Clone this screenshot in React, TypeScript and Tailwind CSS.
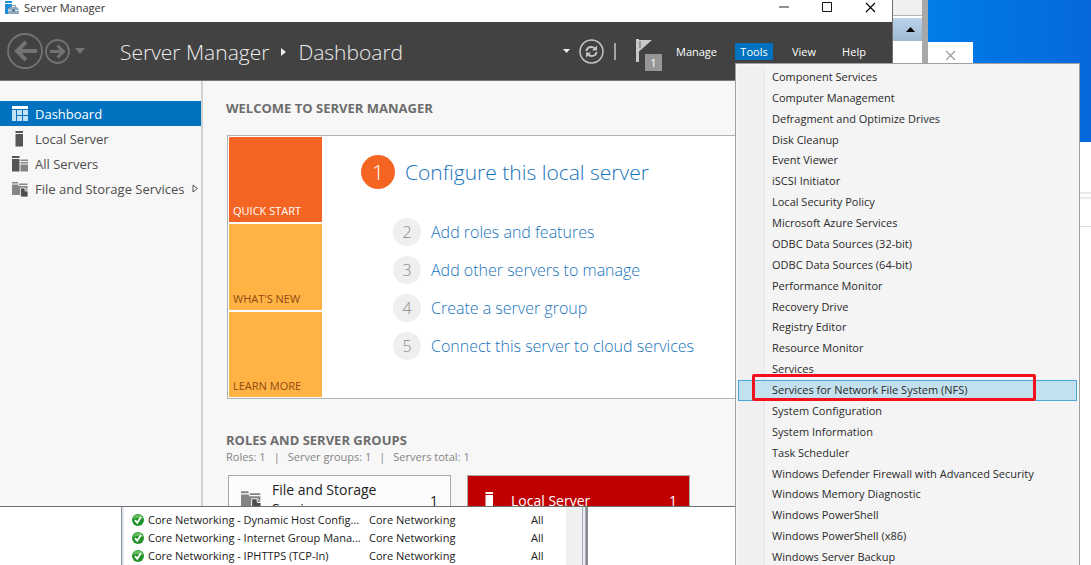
import { clsx } from 'clsx';

const tools = [
    'Component Services',
    'Computer Management',
    'Defragment and Optimize Drives',
    'Disk Cleanup',
    'Event Viewer',
    'iSCSI Initiator',
    'Local Security Policy',
    'Microsoft Azure Services',
    'ODBC Data Sources (32-bit)',
    'ODBC Data Sources (64-bit)',
    'Performance Monitor',
    'Recovery Drive',
    'Registry Editor',
    'Resource Monitor',
    'Services',
    'Services for Network File System (NFS)',
    'System Configuration',
    'System Information',
    'Task Scheduler',
    'Windows Defender Firewall with Advanced Security',
    'Windows Memory Diagnostic',
    'Windows PowerShell',
    'Windows PowerShell (x86)',
    'Windows Server Backup',
];

const steps = [
    'Add roles and features',
    'Add other servers to manage',
    'Create a server group',
    'Connect this server to cloud services',
];

const rules = [
    'Core Networking - Dynamic Host Config...',
    'Core Networking - Internet Group Mana...',
    'Core Networking - IPHTTPS (TCP-In)',
];

function AppIcon() {
    return (
        <svg width="14" height="14" viewBox="0 0 14 14" className="shrink-0">
            <path d="M0 0h7v2H0zM0 3h7v3L3 8v5H0z" fill="#1b8fdc" />
            <path d="M3 8.500 5 6h7l2 2.500V13H3z" fill="#8fa9bd" />
            <path d="M6.500 7V4.500h4V7" fill="none" stroke="#7d9bb2" />
            <path d="M3 9.500h11" stroke="#dce8f0" />
            <path d="M7 8.500h3v2H7z" fill="#4f7088" />
        </svg>
    );
}

function DashboardIcon() {
    return (
        <svg width="16" height="15" viewBox="0 0 16 15">
            <path d="M0 0h16v3H0z" fill="#fff" />
            <path d="M0 4h4v11H0zM5 4h5v5H5zM11 4h5v5h-5zM5 10h5v5H5zM11 10h5v5h-5z" fill="#c5e2f5" />
        </svg>
    );
}

function ServerIcon({ className }: { className?: string }) {
    return (
        <svg width="16" height="16" viewBox="0 0 16 16" className={className} fill="currentColor">
            <path d="M3.500 0h7.500v2H3.500zM3.500 3h7.500v12.500H3.500z" />
        </svg>
    );
}

function ServersIcon() {
    return (
        <svg width="16" height="16" viewBox="0 0 16 16">
            <path d="M0 0h7.500v2H0zM0 3h7.500v12.500H0z" fill="#555" />
            <path d="M8.500 3.500H16v1.500H8.500zM8.500 6H16v1.500H8.500zM8.500 8.500H16v7H8.500z" fill="#858585" />
        </svg>
    );
}

function StorageIcon({ className }: { className?: string }) {
    return (
        <svg viewBox="0 0 16 16" className={className}>
            <path d="M0 1h6v1.500H0zM7 2.500h8.500V4H7z" fill="#858585" />
            <path d="M0 3.500h6l1 1.500h8.500v9H0z" fill="#858585" />
            <path d="M8.500 7H13l3 3v6H8.500z" fill="#4d4d4d" stroke="#f7f7f7" strokeWidth="0.800" />
            <path d="M13 7v3h3" fill="none" stroke="#f7f7f7" strokeWidth="0.800" />
        </svg>
    );
}

function CheckIcon() {
    return (
        <svg width="12" height="12" viewBox="0 0 12 12" className="shrink-0">
            <circle cx="6" cy="6" r="6" fill="#22922a" />
            <path d="M1 5a5 4.500 0 0 1 10 0q-5-2-10 0" fill="#63bd5c" />
            <path d="m3 6.200 2.200 2.600L9 3" fill="none" stroke="#fff" strokeWidth="1.800" />
        </svg>
    );
}

function FlagIcon() {
    return (
        <svg width="17" height="24" viewBox="0 0 17 24">
            <path d="M0 0h3v23H0z" fill="#c8c8c8" />
            <path d="M3 1h13L3 12.500z" fill="#c8c8c8" />
            <path d="M4 2v7" stroke="#666" />
        </svg>
    );
}

function CloseIcon({ className }: { className?: string }) {
    return (
        <svg width="11" height="11" viewBox="0 0 11 11" className={className}>
            <path d="m1 1 9 9M10 1l-9 9" stroke="currentColor" strokeWidth="1.100" />
        </svg>
    );
}

// Firewall console lying behind Server Manager
function FirewallWindow() {
    return (
        <section className="absolute inset-y-0 left-0 right-[163px] flex border-r-[6px] border-[#a8a8a8] bg-white">
            <div className="w-[122px] border-r border-[#8b949c]" />
            <div className="flex w-[466px] border-l-2 border-[#dfe5ec]">
                <div className="flex flex-1 flex-col justify-end overflow-hidden">
                    <table className="w-full table-fixed text-left text-[11px] leading-[18px] text-[#202020]">
                        <colgroup>
                            <col className="w-[245px]" />
                            <col className="w-[162px]" />
                            <col />
                        </colgroup>
                        <tbody>
                            {rules.map((rule) => (
                                <tr key={rule}>
                                    <td className="p-0">
                                        <span className="flex items-center gap-1 pl-2 whitespace-nowrap">
                                            <CheckIcon />
                                            {rule}
                                        </span>
                                    </td>
                                    <td className="p-0">Core Networking</td>
                                    <td className="p-0">All</td>
                                </tr>
                            ))}
                        </tbody>
                    </table>
                </div>
                <div className="w-4 bg-[#f0f0f0]" />
                <div className="w-1 border-x border-[#a4adb8] bg-[#e9edf2]" />
                <div className="w-[2px] bg-[#8a8a8a]" />
            </div>
            <div className="flex flex-1 flex-col items-end">
                <div className="h-4 w-full border-b border-[#b4b4b4] bg-[#f0f0f0]" />
                <button aria-label="Collapse actions" className="mt-0.5 flex h-[23px] w-full items-center justify-end bg-linear-to-b from-[#bcd3ea] to-[#9fb9d3] pr-[7px]">
                    <svg width="9" height="5" viewBox="0 0 9 5"><path d="M0 5 4.500 0 9 5z" fill="#000" /></svg>
                </button>
            </div>
        </section>
    );
}

function TitleBar() {
    return (
        <div className="flex h-[22px] items-start bg-white text-[11px] leading-4 text-[#333]">
            <div className="flex flex-1 items-center gap-[5px] pl-[5px]">
                <AppIcon />
                Server Manager
            </div>
            <div className="flex h-[14px] items-center text-black">
                <button aria-label="Minimize" className="flex w-[43px] justify-center">
                    <svg width="10" height="2" viewBox="0 0 10 2"><path d="M0 1h10" stroke="#222" /></svg>
                </button>
                <button aria-label="Maximize" className="flex w-[43px] justify-center">
                    <svg width="10" height="10" viewBox="0 0 10 10"><path d="M.5.5h9v9h-9z" fill="none" stroke="#111" /></svg>
                </button>
                <button aria-label="Close" className="flex w-11 justify-center">
                    <CloseIcon />
                </button>
            </div>
        </div>
    );
}

function ToolsMenu() {
    return (
        <div className="absolute left-0 top-full z-10 mt-[3px] w-[345px] border border-[#a0a0a0] bg-[#f4f4f4] px-0.5 pt-[3px] pb-0.5">
            <div className="absolute inset-y-0.5 left-0.5 w-[27px] border-r border-[#e6e6e6] bg-[#f0f0f0]" />
            <ul className="relative grid h-[501px] auto-rows-fr text-[11px] leading-4 text-[#2a2a2a]">
                {tools.map((tool) => {
                    const selected = tool.includes('NFS');
                    return (
                        <li key={tool} className="relative flex">
                            <button
                                className={clsx(
                                    'flex flex-1 items-center border pl-[33px] text-left whitespace-nowrap',
                                    selected ? 'border-[#4ba6dc] bg-[#c3e0ef]' : 'border-transparent',
                                )}
                            >
                                {tool}
                            </button>
                            {selected && (
                                <span className="pointer-events-none absolute -top-1.5 bottom-0 left-3.5 w-[284px] rounded-xs border-[3px] border-[#f5101c]" />
                            )}
                        </li>
                    );
                })}
            </ul>
        </div>
    );
}

function Header() {
    return (
        <header className="flex h-[59px] items-center border-b border-[#777] bg-[#424242] text-white">
            <button aria-label="Back" className="ml-[7px]">
                <svg width="36" height="36" viewBox="0 0 36 36" fill="none" stroke="#737373">
                    <circle cx="18" cy="18" r="17" strokeWidth="1.800" />
                    <path d="M30 18H10M19 9l-9 9 9 9" strokeWidth="4" />
                </svg>
            </button>
            <button aria-label="Forward" className="ml-0.5">
                <svg width="25" height="25" viewBox="0 0 25 25" fill="none" stroke="#737373">
                    <circle cx="12.500" cy="12.500" r="11.500" strokeWidth="1.800" />
                    <path d="M5 12.500h13M12.500 6.500l6 6-6 6" strokeWidth="3" />
                </svg>
            </button>
            <button aria-label="History" className="ml-[5px]">
                <svg width="10" height="6" viewBox="0 0 10 6"><path d="M0 0h10L5 6z" fill="#737373" /></svg>
            </button>
            <h1 className="ml-[35px] flex flex-1 items-center gap-3 pt-0.5 text-[21px] leading-7 font-light text-[#ececec] whitespace-nowrap">
                Server Manager
                <svg width="5" height="8" viewBox="0 0 5 8"><path d="M0 0v8l5-4z" fill="#ececec" /></svg>
                Dashboard
            </h1>
            <button aria-label="Refresh options">
                <svg width="7" height="4" viewBox="0 0 7 4"><path d="M0 0h7L3.500 4z" fill="#eee" /></svg>
            </button>
            <button aria-label="Refresh" className="ml-[9px]">
                <svg width="25" height="25" viewBox="0 0 25 25" fill="none" stroke="#c4c4c4">
                    <circle cx="12.500" cy="12.500" r="11.500" strokeWidth="1.500" />
                    <path d="M7.500 12q.5-4 5-4 2.500 0 3.500 2M17.500 13q-.5 4-5 4-2.500 0-3.500-2" strokeWidth="2" />
                    <path d="M13 11.500h5V6.500zM12 13.500H7v5z" fill="#c4c4c4" stroke="none" />
                </svg>
            </button>
            <span className="ml-[10px] h-[17px] w-[2px] bg-[#a5a5a5]" />
            <button aria-label="Notifications" className="relative ml-5 mr-[23px]">
                <FlagIcon />
                <span className="absolute left-[9px] top-[15px] flex size-[17px] items-center justify-center bg-[#979598] text-[11px] leading-4">1</span>
            </button>
            <nav className="flex items-center text-[11px] leading-[17px]">
                <button className="w-[41px] text-center">Manage</button>
                <div className="relative ml-[18px]">
                    <button className="w-[38px] bg-[#0072c0] text-center">Tools</button>
                    <ToolsMenu />
                </div>
                <button className="ml-3 w-[38px] text-center">View</button>
                <button className="mr-[19px] ml-3 w-[38px] text-center">Help</button>
            </nav>
        </header>
    );
}

const navItem = 'flex h-[25px] w-full items-center gap-[7px] pl-3 text-left whitespace-nowrap';

function Sidebar() {
    return (
        <nav className="w-[203px] shrink-0 border-r-2 border-[#d2d2d2] pt-5 text-[13px] leading-5 text-[#4d4d4d]">
            <button className={clsx(navItem, 'bg-[#0072c0] text-white')}><DashboardIcon />Dashboard</button>
            <button className={navItem}><ServerIcon className="text-[#555]" />Local Server</button>
            <button className={navItem}><ServersIcon />All Servers</button>
            <button className={navItem}>
                <StorageIcon className="size-4 shrink-0" />
                File and Storage Services
                <svg width="7" height="9" viewBox="0 0 7 9"><path d="M1 1v7l4.500-3.500z" fill="none" stroke="#555" /></svg>
            </button>
        </nav>
    );
}

function Welcome() {
    return (
        <div className="mt-[18px] ml-px flex h-[264px] border border-[#b2b2b2] bg-white p-px">
            <div className="flex w-[93px] flex-col gap-0.5 text-[11px] leading-4">
                <button className="flex flex-1 items-end bg-[#f46523] px-1 pb-[3px] text-white">QUICK START</button>
                <button className="flex flex-1 items-end bg-[#ffb344] px-1 pb-[3px] text-[#8f4a12]">WHAT'S NEW</button>
                <button className="flex flex-1 items-end bg-[#ffb344] px-1 pb-[3px] text-[#8f4a12]">LEARN MORE</button>
            </div>
            <ol className="pt-[18px] pl-[39px] font-light whitespace-nowrap">
                <li className="flex items-center gap-2.5 text-[21px] leading-8">
                    <span className="flex size-[34px] items-center justify-center rounded-full bg-[#f46523] text-white">1</span>
                    <a href="#configure" className="text-[#1874bb]">Configure this local server</a>
                </li>
                <li className="mt-[29px] ml-8">
                    <ol className="flex flex-col gap-2.5 text-[16px] leading-7">
                        {steps.map((step, i) => (
                            <li key={step} className="flex items-center gap-2.5">
                                <span className="flex size-7 items-center justify-center rounded-full bg-[#efefef] text-[#8a8a8a]">{i + 2}</span>
                                <a href={`#step-${i + 2}`} className="text-[#1874bb]">{step}</a>
                            </li>
                        ))}
                    </ol>
                </li>
            </ol>
        </div>
    );
}

function Roles() {
    return (
        <>
            <h2 className="mt-8 text-[13px] leading-[18px] font-bold text-[#6d6d6d]">ROLES AND SERVER GROUPS</h2>
            <p className="flex gap-2 text-[11px] leading-4 text-[#858585]">
                <span>Roles: 1</span><span>|</span><span>Server groups: 1</span><span>|</span><span>Servers total: 1</span>
            </p>
            <div className="mt-2.5 ml-0.5 flex gap-4">
                <button className="flex h-[50px] w-[223px] items-center border border-[#a8a8a8] bg-[#fcfcfc] px-3 text-left text-[14px] leading-[19px] text-[#222]">
                    <StorageIcon className="size-5 shrink-0" />
                    <span className="ml-[11px] flex-1 pb-[3px]">File and Storage<br />Services</span>
                    <span>1</span>
                </button>
                <button className="flex h-[50px] w-[223px] items-center border border-[#a8a8a8] bg-[#c00000] px-3 text-left text-[14px] leading-[19px] text-white">
                    <ServerIcon className="ml-0.5 shrink-0" />
                    <span className="ml-[13px] flex-1">Local Server</span>
                    <span>1</span>
                </button>
            </div>
        </>
    );
}

function ServerManager() {
    return (
        <section className="absolute left-0 right-[198px] top-0 flex h-[507px] flex-col border-r border-b border-[#6f6f6f] bg-[#f7f7f7]">
            <TitleBar />
            <Header />
            <div className="flex min-h-0 flex-1 overflow-hidden">
                <Sidebar />
                <main className="min-w-0 flex-1 pt-[18px] pl-[23px]">
                    <h2 className="text-[13px] leading-[18px] font-bold text-[#6d6d6d]">WELCOME TO SERVER MANAGER</h2>
                    <Welcome />
                    <Roles />
                </main>
            </div>
        </section>
    );
}

export default function App() {
    return (
        <div className="relative min-h-screen overflow-hidden bg-[#0673e4] bg-linear-to-r from-[#007ce8] from-85% to-[#0668dc] font-['Open_Sans','Noto_Sans',sans-serif]">
            <section className="absolute bottom-0 left-1/2 right-0 top-[142px] flex flex-col bg-white">
                <div className="mt-[50px] h-[7px] border-y-2 border-[#e9e9e9]" />
                <div className="h-7 border-b border-[#dcdcdc]" />
            </section>
            <section className="absolute right-[118px] top-[42px] flex h-24 w-[45px] items-start justify-center bg-white pt-2">
                <button aria-label="Close dialog"><CloseIcon className="text-[#999]" /></button>
            </section>
            <FirewallWindow />
            <ServerManager />
        </div>
    );
}
